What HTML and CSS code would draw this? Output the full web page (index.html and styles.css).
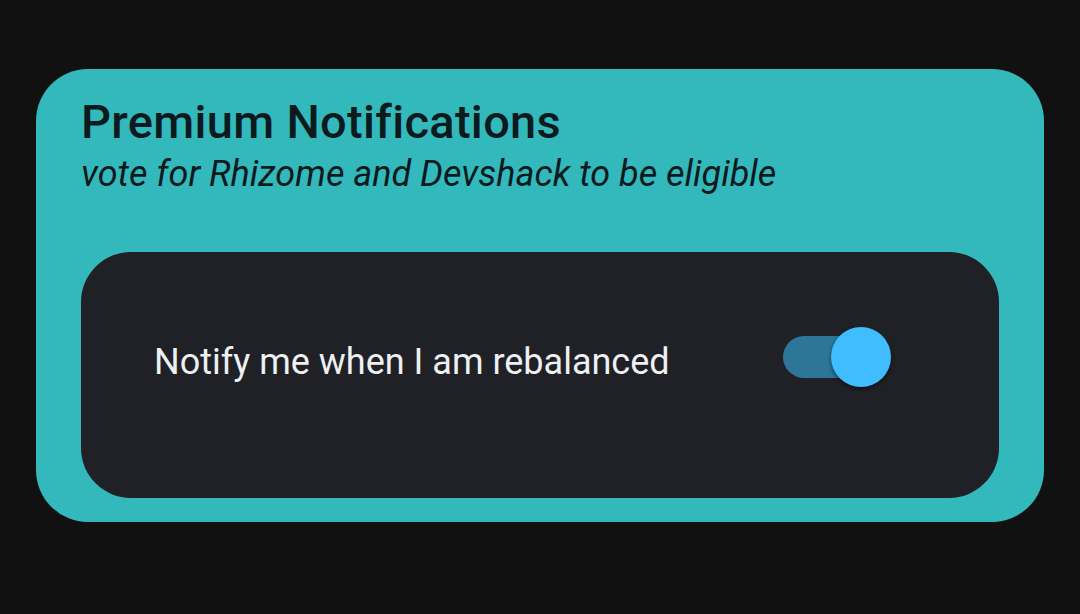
FILE: index.html
```html
<!DOCTYPE html>
<html>
<head>
<meta charset="utf-8">
<link rel="stylesheet" href="styles.css">
</head>
<body>
<div class="card">
  <div class="header">
    <h1 class="title">Premium Notifications</h1>
    <p class="subtitle">vote for Rhizome and Devshack to be eligible</p>
  </div>
  <div class="panel">
    <span class="label">Notify me when I am rebalanced</span>
    <div class="switch">
      <div class="track"></div>
      <div class="thumb"></div>
    </div>
  </div>
</div>
</body>
</html>
```
FILE: styles.css
```css
html, body {
  margin: 0;
  padding: 0;
  background: #111111;
  width: 1080px;
  height: 614px;
  overflow: hidden;
  font-family: Roboto, "Noto Sans", sans-serif;
}
.card {
  margin: 69px 0 0 36px;
  width: 1008px;
  height: 453px;
  box-sizing: border-box;
  background: #33b8bc;
  border-radius: 52px;
  padding: 0 45px;
  display: flex;
  flex-direction: column;
}
.header {
  padding: 25px 0 0 0;
  height: 183px;
  box-sizing: border-box;
}
.title {
  margin: 0;
  font-size: 47px;
  font-weight: 500;
  line-height: 56px;
  letter-spacing: 0.3px;
  color: #0b1a1c;
}
.subtitle {
  margin: 2px 0 0 0;
  font-size: 36px;
  font-style: italic;
  line-height: 44px;
  color: #0b1a1c;
}
.panel {
  height: 246px;
  box-sizing: border-box;
  background: #1f2126;
  border-radius: 50px;
  display: flex;
  align-items: flex-start;
  padding: 75px 108px 0 73px;
}
.label {
  flex: 1;
  font-size: 36px;
  line-height: 44px;
  color: #eef0f2;
  margin-top: 13px;
}
.switch {
  position: relative;
  width: 108px;
  height: 60px;
}
.track {
  position: absolute;
  left: 0;
  top: 9px;
  width: 86px;
  height: 42px;
  border-radius: 21px;
  background: #2e7699;
}
.thumb {
  position: absolute;
  right: 0;
  top: 0;
  width: 60px;
  height: 60px;
  border-radius: 50%;
  background: #40bdff;
  box-shadow: 0 2px 4px rgba(0,0,0,0.5);
}
```
